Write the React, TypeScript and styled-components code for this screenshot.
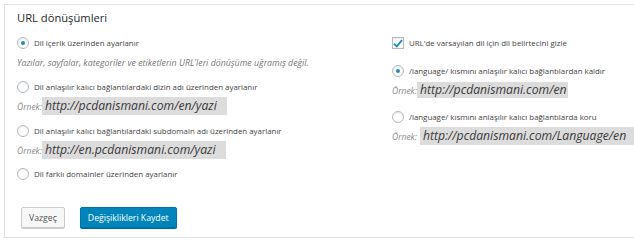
import styled, { createGlobalStyle } from "styled-components";

const GlobalStyle = createGlobalStyle`
	html, body {
		margin: 0;
		padding: 0;
		background: #ffffff;
	}
	body {
		font-family: "Open Sans", "Noto Sans", sans-serif;
	}
`;

const Radio = ({ checked }: { checked?: boolean }) => (
	<RadioMark $checked={checked} />
);

const Check = () => (
	<CheckBox>
		<svg width="10" height="9" viewBox="0 0 10 9">
			<path d="M1 4.6 L3.8 7.4 L9 1.2" fill="none" stroke="#1e8cbe" strokeWidth="1.9" />
		</svg>
	</CheckBox>
);

const Example = ({ url, spaced, tight }: { url: string; spaced?: boolean; tight?: boolean }) => (
	<ExampleRow>
		<ExampleLabel $spaced={spaced}>Örnek:</ExampleLabel>
		<Code $tight={tight}>{url}</Code>
	</ExampleRow>
);

const App = () => {
	return (
		<>
			<GlobalStyle />
			<Card>
				<Title>URL dönüşümleri</Title>
				<Columns>
					<Column>
						<Option>
							<Radio checked />
							<span>Dil içerik üzerinden ayarlanır</span>
						</Option>
						<Description>
							Yazılar, sayfalar, kategoriler ve etiketlerin URL'leri dönüşüme uğramış değil.
						</Description>
						<Option $mt={3}>
							<Radio />
							<span>Dil anlaşılır kalıcı bağlantılardaki dizin adı üzerinden ayarlanır</span>
						</Option>
						<Example url="http://pcdanismani.com/en/yazi" />
						<Option $mt={6}>
							<Radio />
							<span>Dil anlaşılır kalıcı bağlantılardaki subdomain adı üzerinden ayarlanır</span>
						</Option>
						<Example url="http://en.pcdanismani.com/yazi" />
						<Option $mt={5}>
							<Radio />
							<span>Dil farklı domainler üzerinden ayarlanır</span>
						</Option>
					</Column>

					<Column>
						<Option>
							<Check />
							<span>URL'de varsayılan dil için dil belirtecini gizle</span>
						</Option>
						<Option $mt={8}>
							<Radio checked />
							<span>/language/ kısmını anlaşılır kalıcı bağlantılardan kaldır</span>
						</Option>
						<Example url="http://pcdanismani.com/en" tight />
						<Option $mt={8}>
							<Radio />
							<span>/language/ kısmını anlaşılır kalıcı bağlantılarda koru</span>
						</Option>
						<Example url="http://pcdanismani.com/Language/en" spaced />
					</Column>
				</Columns>

				<Actions>
					<Button>Vazgeç</Button>
					<Button $primary>Değişiklikleri Kaydet</Button>
				</Actions>
			</Card>
		</>
	);
};

export default App;

const Card = styled.div`
	margin: 4px 0 0 4px;
	width: 618px;
	height: 232px;
	box-sizing: content-box;
	border: 1px solid #e2e2e2;
	background: #ffffff;
	box-shadow: 3px 3px 2px rgba(0, 0, 0, 0.45);
	padding: 0 0 0 12px;
	overflow: hidden;
	display: flex;
	flex-direction: column;
`;

const Title = styled.div`
	margin-top: 4px;
	height: 18px;
	line-height: 18px;
	font-size: 11.2px;
	color: #23282d;
`;

const Columns = styled.div`
	display: grid;
	grid-template-columns: 375px 1fr;
	margin-top: 6px;
`;

const Column = styled.div`
	display: flex;
	flex-direction: column;
`;

const Option = styled.label<{ $mt?: number }>`
	display: flex;
	align-items: center;
	gap: 5px;
	height: 20px;
	margin-top: ${(p) => p.$mt || 0}px;
	font-size: 7.9px;
	color: #444;
	white-space: nowrap;
`;

const RadioMark = styled.span<{ $checked?: boolean }>`
	position: relative;
	width: 10px;
	height: 10px;
	flex: none;
	border: 1px solid #b4b9be;
	border-radius: 50%;
	background: #fff;
	box-shadow: inset 0 1px 2px rgba(0, 0, 0, 0.08);

	&::after {
		content: "";
		display: ${(p) => (p.$checked ? "block" : "none")};
		position: absolute;
		left: 3px;
		top: 3px;
		width: 4px;
		height: 4px;
		border-radius: 50%;
		background: #1e8cbe;
	}
`;

const CheckBox = styled.span`
	width: 10px;
	height: 10px;
	flex: none;
	border: 1px solid #b4b9be;
	background: #fff;
	display: flex;
	align-items: center;
	justify-content: center;
	box-shadow: inset 0 1px 2px rgba(0, 0, 0, 0.08);
`;

const Description = styled.div`
	height: 21px;
	line-height: 21px;
	font-size: 8.8px;
	font-style: italic;
	color: #777;
	white-space: nowrap;
`;

const ExampleRow = styled.div`
	display: flex;
	align-items: center;
	height: 18px;
	white-space: nowrap;
`;

const ExampleLabel = styled.span<{ $spaced?: boolean }>`
	font-size: 8.5px;
	font-style: italic;
	color: #888;
	margin-right: ${(p) => (p.$spaced ? 3 : 0)}px;
`;

const Code = styled.span<{ $tight?: boolean }>`
	display: inline-block;
	height: ${(p) => (p.$tight ? 16 : 18)}px;
	line-height: ${(p) => (p.$tight ? 16 : 18)}px;
	padding: 0 ${(p) => (p.$tight ? 1 : 10)}px 0 3px;
	background: #dcdcdc;
	font-size: 12.2px;
	font-style: italic;
	font-weight: 500;
	color: #3a3a3a;
`;

const Actions = styled.div`
	display: flex;
	gap: 15px;
	margin-top: 23px;
	padding-left: 4px;
`;

const Button = styled.button<{ $primary?: boolean }>`
	height: 21px;
	padding: 0 7px;
	font-family: "Open Sans", "Noto Sans", sans-serif;
	font-size: 8.7px;
	border-radius: 2px;
	border: 1px solid ${(p) => (p.$primary ? "#0073aa" : "#cccccc")};
	background: ${(p) => (p.$primary ? "#0085ba" : "#f7f7f7")};
	color: ${(p) => (p.$primary ? "#ffffff" : "#555555")};
	box-shadow: ${(p) => (p.$primary ? "0 1px 0 #006799" : "0 1px 0 #cccccc")};
`;
